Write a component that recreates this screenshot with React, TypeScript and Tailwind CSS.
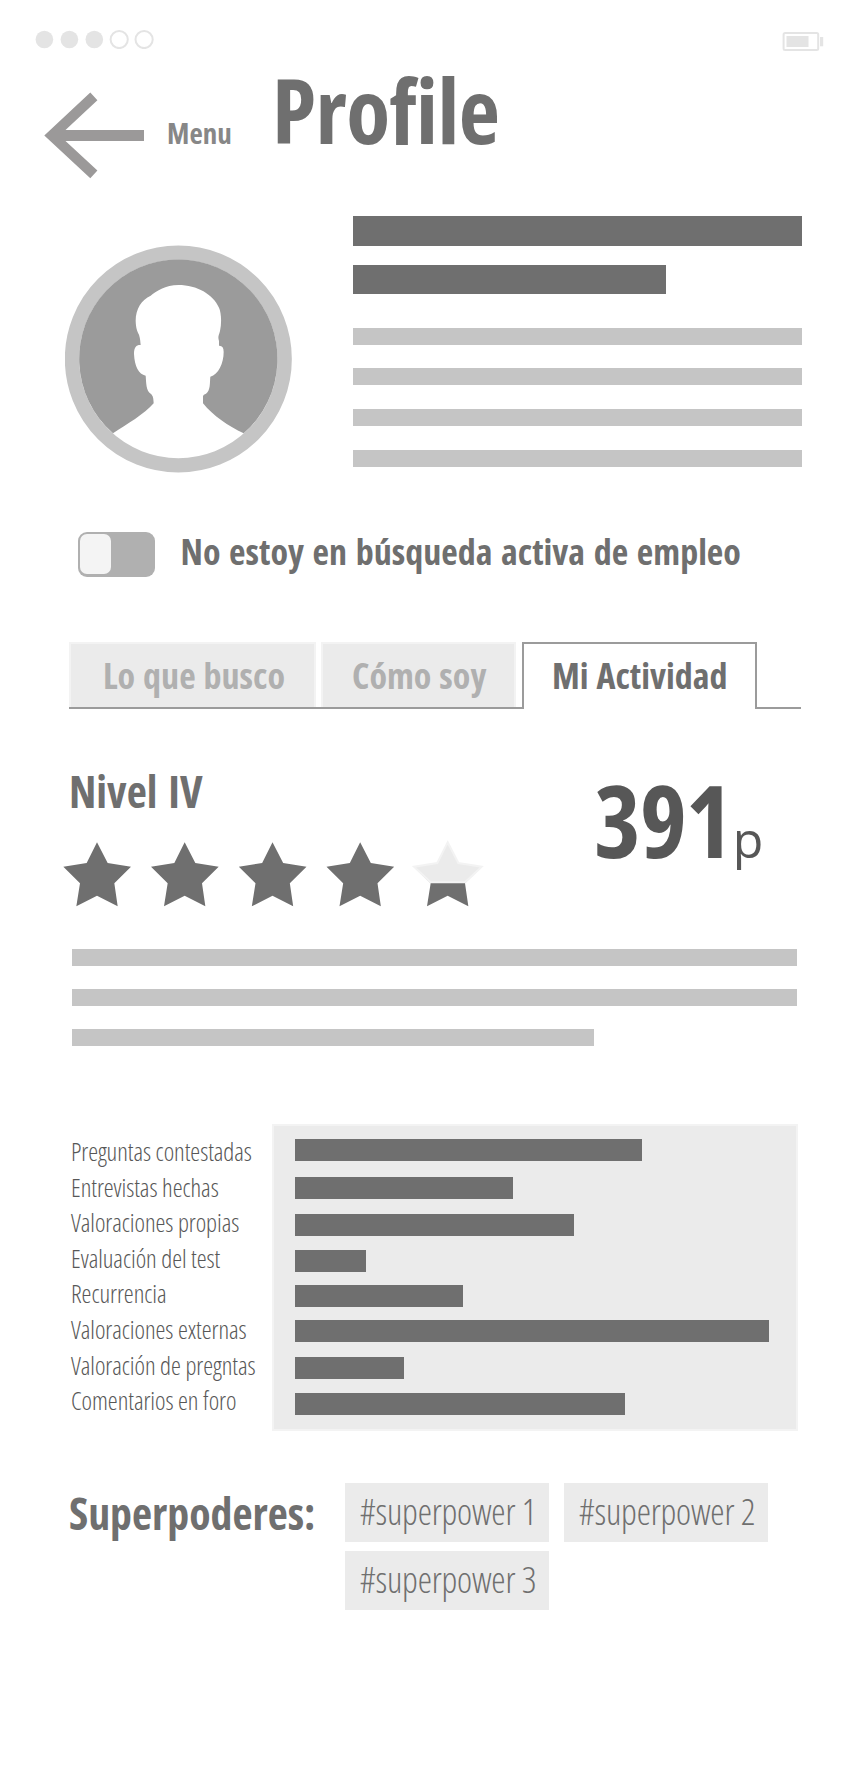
const chart = [
  { label: "Preguntas contestadas", width: 347, gap: 13 },
  { label: "Entrevistas hechas", width: 218, gap: 16 },
  { label: "Valoraciones propias", width: 279, gap: 15 },
  { label: "Evaluación del test", width: 71, gap: 14 },
  { label: "Recurrencia", width: 168, gap: 13 },
  { label: "Valoraciones externas", width: 474, gap: 13 },
  { label: "Valoración de pregntas", width: 109, gap: 15 },
  { label: "Comentarios en foro", width: 330, gap: 14 },
];

const starPath = "M171 277L203 339L273 350L223 400L233 469L171 437L109 469L120 400L70 350L140 339Z";

function StatusBar() {
  return (
    <div className="flex h-[60px] justify-between pl-[35px] pr-[38px]">
      <svg className="mt-[29px] h-[20px] w-[120px]" viewBox="35 29 120 20">
        <g fill="#e4e4e4">
          <circle cx="44.4" cy="39.5" r="8.8" />
          <circle cx="69.4" cy="39.5" r="8.8" />
          <circle cx="94.3" cy="39.5" r="8.8" />
        </g>
        <g fill="#fff" stroke="#e4e4e4" strokeWidth="2">
          <circle cx="119.2" cy="39.5" r="8.6" />
          <circle cx="144.1" cy="39.5" r="8.6" />
        </g>
      </svg>
      <svg className="mt-[31px] h-[22px] w-[43px]" viewBox="781 31 43 22">
        <rect x="783.6" y="33" width="34.6" height="17" rx="1.5" fill="none" stroke="#e4e4e4" strokeWidth="2" />
        <rect x="786.5" y="36" width="22" height="11" fill="#e4e4e4" />
        <rect x="820" y="37" width="3.2" height="9.3" fill="#e4e4e4" />
      </svg>
    </div>
  );
}

function Header() {
  return (
    <div className="flex h-[156px] items-start">
      <svg className="ml-[44px] mt-[32px] h-[88px] w-[101px]" viewBox="44 92 101 88">
        <path d="M44.3 135.5L90.3 92.6L97.4 100.2L65.5 130H144V141H65.5L97.4 170.4L90.3 178.2Z" fill="#9b9999" />
      </svg>
      <span className="ml-[22px] mt-[58px] w-[66px] text-[29px] font-bold leading-[29px] text-[#878787]">Menu</span>
      <h1 className="ml-[39px] mt-[4px] text-[90px] font-bold leading-[90px] tracking-[-0.5px] text-[#6f6f6f]">Profile</h1>
    </div>
  );
}

function Summary() {
  return (
    <div className="flex h-[251px]">
      <svg className="ml-[65px] mt-[29px] h-[228px] w-[228px]" viewBox="75 75 684 684">
        <circle cx="415" cy="417" r="319" fill="#fff" stroke="#c5c5c5" strokeWidth="43" />
        <path
          fill="#9b9b9b"
          d="M219 640A297.500 297.500 0 1 1 611 640C565 618 520 588 489 550V528Q490 524 498 521C512 510 509 488 511 470C535 464 551 430 551 396Q551 376 537 377V363C533 350 536 348 540 333C546 305 543 276 537 263C519 223 472 195 415 195C377 195 347 214 332 227C305 239 287 266 287 303C288 326 292 335 297 344C301 356 301 366 302 375C290 374 282 381 282 402C284 439 296 463 317 467C319 487 317 512 334 523C341 531 340 540 341 550C313 583 261 612 219 640Z"
        />
      </svg>
      <div className="ml-[60px] w-[449px]">
        <div className="h-[30px] bg-[#6f6f6f]" />
        <div className="mt-[19px] h-[29px] w-[313px] bg-[#6f6f6f]" />
        <div className="mt-[34px] h-[17px] bg-[#c5c5c5]" />
        <div className="mt-[23px] h-[17px] bg-[#c5c5c5]" />
        <div className="mt-[24px] h-[17px] bg-[#c5c5c5]" />
        <div className="mt-[24px] h-[17px] bg-[#c5c5c5]" />
      </div>
    </div>
  );
}

function Availability() {
  return (
    <div className="flex h-[175px] pl-[77.5px] pt-[65px]">
      <div className="h-[44.5px] w-[77px] rounded-[9px] bg-[#b0b0b0] p-[2px]">
        <div className="h-[40px] w-[31px] rounded-[7px] bg-[#f4f4f4]" />
      </div>
      <span className="ml-[26px] mt-[2px] whitespace-nowrap text-[36px] font-bold leading-[36px] text-[#6f6f6f] [word-spacing:2.2px]">
        No estoy en búsqueda activa de empleo
      </span>
    </div>
  );
}

function Tabs() {
  return (
    <div className="flex h-[67px] pl-[69px] text-[36px] font-bold leading-[36px] [word-spacing:1.5px]">
      <div className="w-[247px] border-b-2 border-[#9b9b9b]">
        <div className="h-[65px] border-x-2 border-t-2 border-[#f3f3f3] bg-[#ebebeb] pl-[32px] pt-[14px] text-[#b0b0b0]">Lo que busco</div>
      </div>
      <div className="w-[5px] border-b-2 border-[#9b9b9b]" />
      <div className="w-[195px] border-b-2 border-[#9b9b9b]">
        <div className="h-[65px] border-x-2 border-t-2 border-[#f3f3f3] bg-[#ebebeb] pl-[29px] pt-[14px] text-[#b0b0b0]">Cómo soy</div>
      </div>
      <div className="w-[6px] border-b-2 border-[#9b9b9b]" />
      <div className="w-[235px] border-x-2 border-t-2 border-[#9b9b9b] pl-[28px] pt-[14px] text-[#6f6f6f]">Mi Actividad</div>
      <div className="w-[44px] border-b-2 border-[#9b9b9b]" />
    </div>
  );
}

function Level() {
  return (
    <div className="flex h-[240px] pl-[60px]">
      <div className="w-[534px] pt-[60px]">
        <h2 className="ml-[9px] text-[44px] font-bold leading-[44px] text-[#6f6f6f] [word-spacing:3px]">Nivel IV</h2>
        <svg className="mt-[23px] h-[80px] w-[430px]" viewBox="60 258 1290 240">
          {[0, 263, 526.500, 789.500].map((x) => (
            <path key={x} d={starPath} transform={`translate(${x} 0)`} fill="#6f6f6f" />
          ))}
          <path d={starPath} transform="translate(1052 0)" fill="#6f6f6f" />
          <path d="M1223 277L1255 339L1325 350L1275 397H1172L1122 350L1192 339Z" fill="#ebebeb" stroke="#f3f3f3" strokeWidth="6" />
        </svg>
      </div>
      <div className="flex h-fit items-baseline pt-[60px] text-[#575757]">
        <span className="text-[100px] font-bold leading-[100px] tracking-[-1px]">391</span>
        <span className="font-stretch-normal ml-[1px] text-[50px] leading-[50px]">p</span>
      </div>
    </div>
  );
}

function Chart() {
  return (
    <div className="flex h-[307px]">
      <div className="w-[272px] pl-[71px] pt-[10px] text-[25px] font-light tracking-[-0.06px] text-[#575757]">
        {chart.map((row) => (
          <div key={row.label} className="h-[35.600px] whitespace-nowrap leading-[35.600px]">{row.label}</div>
        ))}
      </div>
      <div className="w-[526px] border-2 border-[#f3f3f3] bg-[#ebebeb] pl-[21px]">
        {chart.map((row) => (
          <div key={row.label} className="h-[22px] bg-[#6f6f6f]" style={{ width: row.width, marginTop: row.gap }} />
        ))}
      </div>
    </div>
  );
}

function Superpowers() {
  return (
    <div className="flex pl-[69px] pt-[52px] text-[#6f6f6f]">
      <h2 className="mt-[9px] w-[276px] text-[43.8px] font-bold leading-[43px]">Superpoderes:</h2>
      <div className="flex w-[440px] flex-wrap gap-x-[15px] gap-y-[9px]">
        {["#superpower 1", "#superpower 2", "#superpower 3"].map((tag) => (
          <span
            key={tag}
            className="h-[59px] w-[204px] whitespace-nowrap bg-[#ebebeb] pl-[15px] pt-[11px] text-[36px] font-light leading-[36px] tracking-[-0.2px]"
          >
            {tag}
          </span>
        ))}
      </div>
    </div>
  );
}

export default function App() {
  return (
    <main className="font-stretch-condensed h-[1792px] w-[862px] overflow-hidden bg-white font-['Open_Sans',sans-serif]">
      <StatusBar />
      <Header />
      <Summary />
      <Availability />
      <Tabs />
      <Level />
      <div className="h-[175px] pl-[72px]">
        <div className="h-[17px] w-[725px] bg-[#c5c5c5]" />
        <div className="mt-[23px] h-[17px] w-[725px] bg-[#c5c5c5]" />
        <div className="mt-[23px] h-[17px] w-[522px] bg-[#c5c5c5]" />
      </div>
      <Chart />
      <Superpowers />
    </main>
  );
}
